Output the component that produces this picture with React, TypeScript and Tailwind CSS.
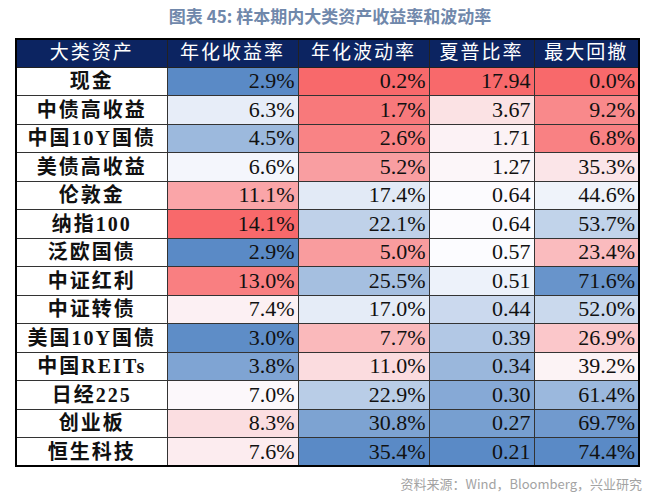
import React from "react";

type Row = {
  name: string;
  ret: number;
  vol: number;
  sharpe: number;
  dd: number;
};

const rows: Row[] = [
  { name: "现金", ret: 2.9, vol: 0.2, sharpe: 17.94, dd: 0.0 },
  { name: "中债高收益", ret: 6.3, vol: 1.7, sharpe: 3.67, dd: 9.2 },
  { name: "中国10Y国债", ret: 4.5, vol: 2.6, sharpe: 1.71, dd: 6.8 },
  { name: "美债高收益", ret: 6.6, vol: 5.2, sharpe: 1.27, dd: 35.3 },
  { name: "伦敦金", ret: 11.1, vol: 17.4, sharpe: 0.64, dd: 44.6 },
  { name: "纳指100", ret: 14.1, vol: 22.1, sharpe: 0.64, dd: 53.7 },
  { name: "泛欧国债", ret: 2.9, vol: 5.0, sharpe: 0.57, dd: 23.4 },
  { name: "中证红利", ret: 13.0, vol: 25.5, sharpe: 0.51, dd: 71.6 },
  { name: "中证转债", ret: 7.4, vol: 17.0, sharpe: 0.44, dd: 52.0 },
  { name: "美国10Y国债", ret: 3.0, vol: 7.7, sharpe: 0.39, dd: 26.9 },
  { name: "中国REITs", ret: 3.8, vol: 11.0, sharpe: 0.34, dd: 39.2 },
  { name: "日经225", ret: 7.0, vol: 22.9, sharpe: 0.3, dd: 61.4 },
  { name: "创业板", ret: 8.3, vol: 30.8, sharpe: 0.27, dd: 69.7 },
  { name: "恒生科技", ret: 7.6, vol: 35.4, sharpe: 0.21, dd: 74.4 },
];

const RED = [248, 105, 107];
const BLUE = [90, 138, 198];
const WHITE = [252, 252, 255];

const median = (vals: number[]) => {
  const s = [...vals].sort((a, b) => a - b);
  const m = Math.floor(s.length / 2);
  return s.length % 2 ? s[m] : (s[m - 1] + s[m]) / 2;
};

const mix = (a: number[], b: number[], t: number) =>
  `rgb(${a.map((c, i) => Math.round(c + (b[i] - c) * t)).join(",")})`;

// excel style 3 colour scale, midpoint = 50th percentile
const scale = (key: keyof Row, highIsRed: boolean) => {
  const vals = rows.map((r) => r[key] as number);
  const min = Math.min(...vals);
  const max = Math.max(...vals);
  const mid = median(vals);
  const lo = highIsRed ? BLUE : RED;
  const hi = highIsRed ? RED : BLUE;
  return (v: number) => {
    if (v <= mid) {
      const t = mid === min ? 1 : (v - min) / (mid - min);
      return mix(lo, WHITE, t);
    }
    const t = max === mid ? 0 : (v - mid) / (max - mid);
    return mix(WHITE, hi, t);
  };
};

const retColor = scale("ret", true);
const volColor = scale("vol", false);
const sharpeColor = scale("sharpe", true);
const ddColor = scale("dd", false);

const headers = ["大类资产", "年化收益率", "年化波动率", "夏普比率", "最大回撤"];

const App = () => {
  return (
    <div className="w-[660px] h-[494px] bg-white flex flex-col">
      <div
        className="h-[38px] pt-[3px] text-center text-[17px] leading-[26px] font-bold text-[#7088ab]"
        style={{ fontFamily: '"Noto Sans CJK SC", "Noto Sans", sans-serif' }}
      >
        图表 45: 样本期内大类资产收益率和波动率
      </div>

      <table
        className="ml-[15px] w-[623px] border-collapse border-2 border-black table-fixed"
        style={{ fontFamily: '"Liberation Serif", "Noto Sans CJK SC", serif' }}
      >
        <colgroup>
          <col className="w-[151px]" />
          <col className="w-[131px]" />
          <col className="w-[131px]" />
          <col className="w-[105px]" />
          <col className="w-[105px]" />
        </colgroup>
        <thead>
          <tr className="h-[28px] bg-[#0c2461]">
            {headers.map((h) => (
              <th
                key={h}
                className="border border-[#222] text-white font-normal text-[19px] leading-[26px] tracking-[2px] text-center p-0"
              >
                {h}
              </th>
            ))}
          </tr>
        </thead>
        <tbody>
          {rows.map((r) => (
            <tr key={r.name} className="h-[28.5px] text-[22px] leading-[26px] text-[#111]">
              <td className="border border-[#333] text-center font-bold text-[20px] tracking-[2px] p-0">
                {r.name}
              </td>
              <td
                className="border border-[#333] text-right pr-[3px]"
                style={{ backgroundColor: retColor(r.ret) }}
              >
                {r.ret.toFixed(1)}%
              </td>
              <td
                className="border border-[#333] text-right pr-[3px]"
                style={{ backgroundColor: volColor(r.vol) }}
              >
                {r.vol.toFixed(1)}%
              </td>
              <td
                className="border border-[#333] text-right pr-[3px]"
                style={{ backgroundColor: sharpeColor(r.sharpe) }}
              >
                {r.sharpe.toFixed(2)}
              </td>
              <td
                className="border border-[#333] text-right pr-[3px]"
                style={{ backgroundColor: ddColor(r.dd) }}
              >
                {r.dd.toFixed(1)}%
              </td>
            </tr>
          ))}
        </tbody>
      </table>

      <div
        className="mt-[8px] pr-[18px] flex justify-end text-[13px] leading-[18px] text-[#a3a3a3]"
        style={{ fontFamily: '"Noto Sans CJK SC", "Noto Sans", sans-serif' }}
      >
        资料来源：Wind，Bloomberg，兴业研究
      </div>
    </div>
  );
};

export default App;
